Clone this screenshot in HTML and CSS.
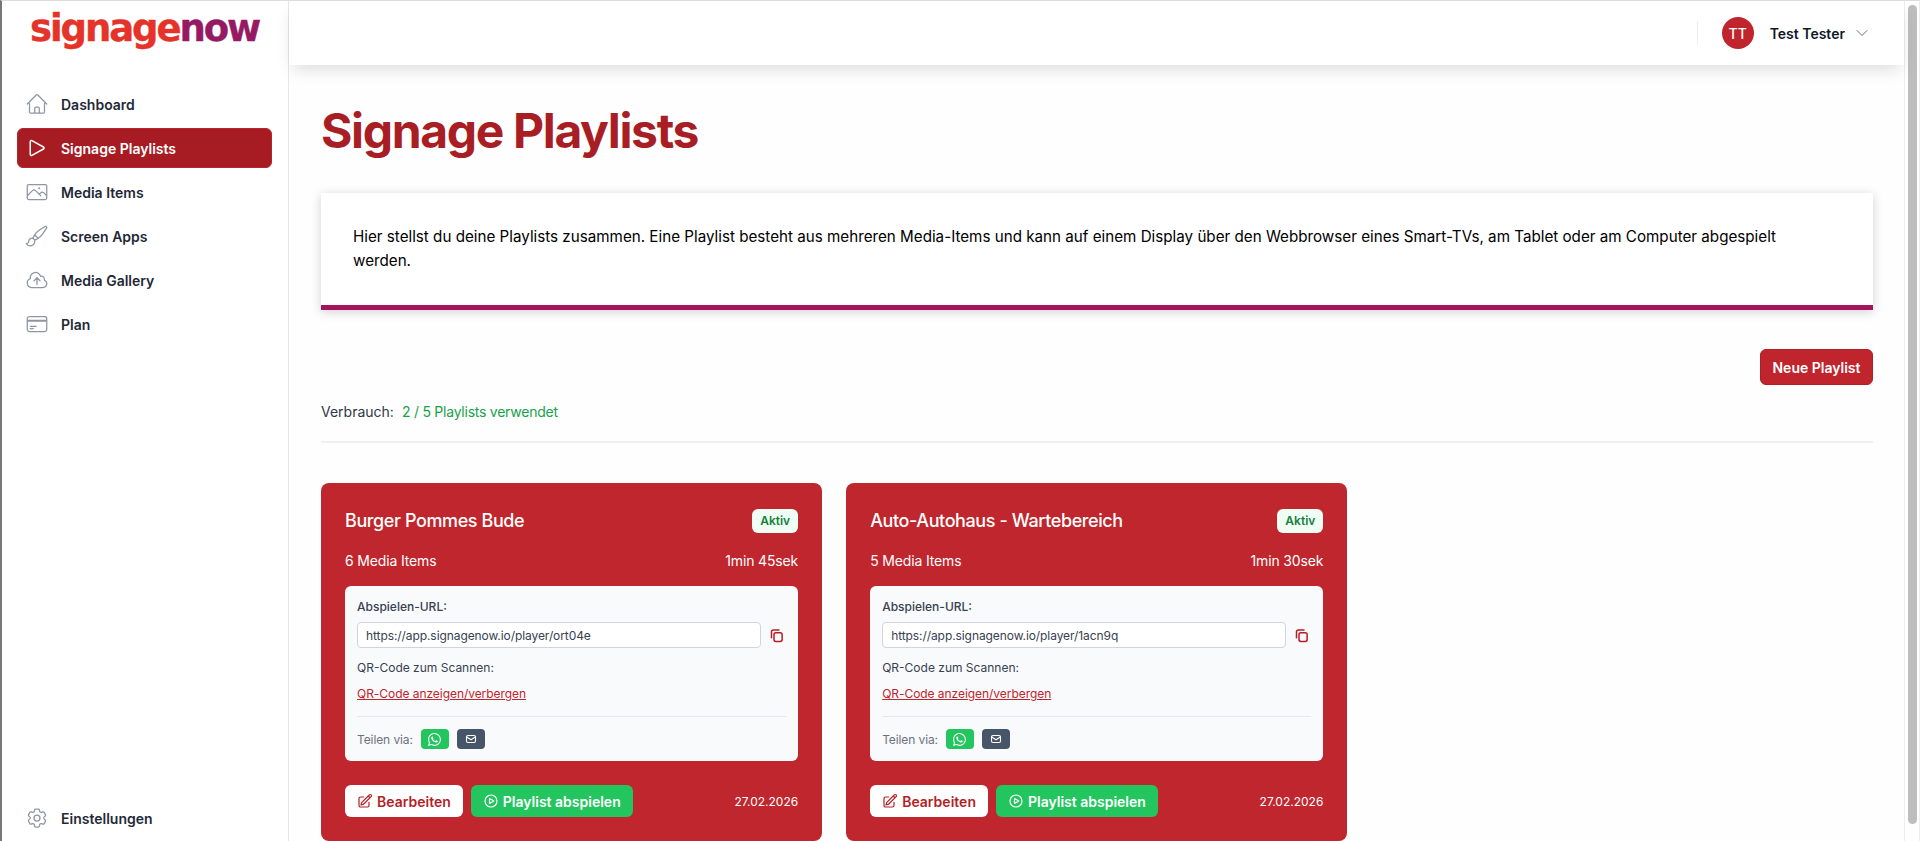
FILE: index.html
```html
<!DOCTYPE html>
<html lang="de">
<head>
<meta charset="utf-8">
<title>Signage Playlists</title>
<link rel="stylesheet" href="styles.css">
</head>
<body>
<div class="window">
  <aside class="sidebar">
    <div class="logo"><span class="logo-a">signage</span><span class="logo-b">now</span></div>
    <nav class="nav">
      <a class="nav-item"><svg class="nav-icon" viewBox="0 0 24 24"><path d="M2.25 12l8.954-8.955c.44-.439 1.152-.439 1.591 0L21.75 12M4.5 9.75v10.125c0 .621.504 1.125 1.125 1.125H9.75v-4.875c0-.621.504-1.125 1.125-1.125h2.25c.621 0 1.125.504 1.125 1.125V21h4.125c.621 0 1.125-.504 1.125-1.125V9.75M8.25 21h8.25"/></svg>Dashboard</a>
      <a class="nav-item active"><svg class="nav-icon" viewBox="0 0 24 24"><path d="M5.25 5.653c0-.856.917-1.398 1.667-.986l11.54 6.347a1.125 1.125 0 010 1.972l-11.54 6.347a1.125 1.125 0 01-1.667-.986V5.653z"/></svg>Signage Playlists</a>
      <a class="nav-item"><svg class="nav-icon" viewBox="0 0 24 24"><path d="M2.25 15.75l5.159-5.159a2.25 2.25 0 013.182 0l5.159 5.159m-1.5-1.5l1.409-1.409a2.25 2.25 0 013.182 0l2.909 2.909m-18 3.75h16.5a1.5 1.5 0 001.5-1.5V6a1.5 1.5 0 00-1.5-1.5H3.75A1.5 1.5 0 002.25 6v12a1.5 1.5 0 001.5 1.5zm10.5-11.25h.008v.008h-.008V8.25zm.375 0a.375.375 0 11-.75 0 .375.375 0 01.75 0z"/></svg>Media Items</a>
      <a class="nav-item"><svg class="nav-icon" viewBox="0 0 24 24"><path d="M9.53 16.122a3 3 0 00-5.78 1.128 2.25 2.25 0 01-2.4 2.245 4.5 4.5 0 008.4-2.245c0-.399-.078-.78-.22-1.128zm0 0a15.998 15.998 0 003.388-1.62m-5.043-.025a15.994 15.994 0 011.622-3.395m3.42 3.42a15.995 15.995 0 004.764-4.648l3.876-5.814a1.151 1.151 0 00-1.597-1.597L14.146 6.32a15.996 15.996 0 00-4.649 4.763m3.42 3.42a6.776 6.776 0 00-3.42-3.42"/></svg>Screen Apps</a>
      <a class="nav-item"><svg class="nav-icon" viewBox="0 0 24 24"><path d="M12 16.5V9.75m0 0l3 3m-3-3l-3 3M6.75 19.5a4.5 4.5 0 01-1.41-8.775 5.25 5.25 0 0110.233-2.33 3 3 0 013.758 3.848A3.752 3.752 0 0118 19.5H6.75z"/></svg>Media Gallery</a>
      <a class="nav-item"><svg class="nav-icon" viewBox="0 0 24 24"><path d="M2.25 8.25h19.5M2.25 9h19.5m-16.5 5.25h6m-6 2.25h3m-3.75 3h15a2.25 2.25 0 002.25-2.25V6.75A2.25 2.25 0 0019.5 4.5h-15a2.25 2.25 0 00-2.25 2.25v10.5A2.25 2.25 0 004.5 19.5z"/></svg>Plan</a>
    </nav>
    <a class="nav-item settings"><svg class="nav-icon" viewBox="0 0 24 24"><path d="M9.594 3.94c.09-.542.56-.94 1.11-.94h2.593c.55 0 1.02.398 1.11.94l.213 1.281c.063.374.313.686.645.87.074.04.147.083.22.127.324.196.72.257 1.075.124l1.217-.456a1.125 1.125 0 011.37.49l1.296 2.247a1.125 1.125 0 01-.26 1.431l-1.003.827c-.293.24-.438.613-.431.992a6.759 6.759 0 010 .255c-.007.378.138.75.43.99l1.005.828c.424.35.534.954.26 1.43l-1.298 2.247a1.125 1.125 0 01-1.369.491l-1.217-.456c-.355-.133-.75-.072-1.076.124a6.57 6.57 0 01-.22.128c-.331.183-.581.495-.644.869l-.213 1.28c-.09.543-.56.941-1.11.941h-2.594c-.55 0-1.02-.398-1.11-.94l-.213-1.281c-.062-.374-.312-.686-.644-.87a6.52 6.52 0 01-.22-.127c-.325-.196-.72-.257-1.076-.124l-1.217.456a1.125 1.125 0 01-1.369-.49l-1.297-2.247a1.125 1.125 0 01.26-1.431l1.004-.827c.292-.24.437-.613.43-.992a6.932 6.932 0 010-.255c.007-.378-.138-.75-.43-.99l-1.004-.828a1.125 1.125 0 01-.26-1.43l1.297-2.247a1.125 1.125 0 011.37-.491l1.216.456c.356.133.751.072 1.076-.124.072-.044.146-.087.22-.128.332-.183.582-.495.644-.869l.214-1.281z"/><path d="M15 12a3 3 0 11-6 0 3 3 0 016 0z"/></svg>Einstellungen</a>
  </aside>

  <div class="main">
    <header class="topbar">
      <span class="divider"></span>
      <span class="avatar">TT</span>
      <span class="username">Test Tester</span>
      <svg class="chevron" viewBox="0 0 24 24"><path d="M19.5 8.25l-7.5 7.5-7.5-7.5"/></svg>
    </header>
    <main class="content">
      <h1 class="title">Signage Playlists</h1>
      <section class="info">
        <p>Hier stellst du deine Playlists zusammen. Eine Playlist besteht aus mehreren Media-Items und kann auf einem Display über den Webbrowser eines Smart-TVs, am Tablet oder am Computer abgespielt werden.</p>
      </section>
      <div class="actions"><button class="btn-new">Neue Playlist</button></div>
      <div class="usage"><span>Verbrauch:</span><span class="usage-val">2 / 5 Playlists verwendet</span></div>
      <div class="grid">
        <article class="card">
          <div class="card-head"><h2>Burger Pommes Bude</h2><span class="badge">Aktiv</span></div>
          <div class="card-meta"><span>6 Media Items</span><span>1min 45sek</span></div>
          <div class="panel">
            <div class="label">Abspielen-URL:</div>
            <div class="url-row">
              <input class="url" readonly value="https://app.signagenow.io/player/ort04e">
              <svg class="copy" viewBox="0 0 24 24"><path d="M4 15.500V6a3 3 0 0 1 3-3h9"/><rect x="8" y="7.500" width="13" height="14" rx="3"/></svg>
            </div>
            <div class="label qr">QR-Code zum Scannen:</div>
            <a class="qr-link">QR-Code anzeigen/verbergen</a>
            <div class="share">
              <span class="share-label">Teilen via:</span>
              <span class="share-btn wa"><svg viewBox="0 0 16 16"><path d="M13.601 2.326A7.854 7.854 0 0 0 7.994 0C3.627 0 .068 3.558.064 7.926c0 1.399.366 2.76 1.057 3.965L0 16l4.204-1.102a7.933 7.933 0 0 0 3.79.965h.004c4.368 0 7.926-3.558 7.93-7.93A7.898 7.898 0 0 0 13.6 2.326zM7.994 14.521a6.573 6.573 0 0 1-3.356-.92l-.24-.144-2.494.654.666-2.433-.156-.251a6.56 6.56 0 0 1-1.007-3.505c0-3.626 2.957-6.584 6.591-6.584a6.56 6.56 0 0 1 4.66 1.931 6.557 6.557 0 0 1 1.928 4.66c-.004 3.639-2.961 6.592-6.592 6.592zm3.615-4.934c-.197-.099-1.17-.578-1.353-.646-.182-.065-.315-.099-.445.099-.133.197-.513.646-.627.775-.114.133-.232.148-.43.05-.197-.1-.836-.308-1.592-.985-.59-.525-.985-1.175-1.103-1.372-.114-.198-.011-.304.088-.403.087-.088.197-.232.296-.346.1-.114.133-.198.198-.33.065-.134.034-.248-.015-.347-.05-.099-.445-1.076-.612-1.47-.16-.389-.323-.335-.445-.34-.114-.007-.247-.007-.38-.007a.729.729 0 0 0-.529.247c-.182.198-.691.677-.691 1.654 0 .977.71 1.916.81 2.049.098.133 1.394 2.132 3.383 2.992.47.205.84.326 1.129.418.475.152.904.129 1.246.08.38-.058 1.171-.48 1.338-.943.164-.464.164-.86.114-.943-.049-.084-.182-.133-.38-.232z"/></svg></span>
              <span class="share-btn mail"><svg viewBox="0 0 24 24"><rect x="3" y="5" width="18" height="14" rx="3"/><path d="M3.500 8l8.500 5.500L20.500 8"/></svg></span>
            </div>
          </div>
          <div class="card-foot">
            <button class="btn-edit"><svg viewBox="0 0 24 24"><path d="M16.862 4.487l1.687-1.688a1.875 1.875 0 112.652 2.652L10.582 16.07a4.5 4.5 0 01-1.897 1.13L6 18l.8-2.685a4.5 4.5 0 011.13-1.897l8.932-8.931zm0 0L19.5 7.125M18 14v4.750A2.250 2.250 0 0115.750 21H5.250A2.250 2.250 0 013 18.750V8.250A2.250 2.250 0 015.250 6H10"/></svg>Bearbeiten</button>
            <button class="btn-play"><svg viewBox="0 0 24 24"><path d="M21 12a9 9 0 11-18 0 9 9 0 0118 0z"/><path d="M15.910 11.672a.375.375 0 010 .656l-5.603 3.113a.375.375 0 01-.557-.328V8.887c0-.286.307-.466.557-.327l5.603 3.112z"/></svg>Playlist abspielen</button>
            <span class="date">27.02.2026</span>
          </div>
        </article>
        <article class="card">
          <div class="card-head"><h2>Auto-Autohaus - Wartebereich</h2><span class="badge">Aktiv</span></div>
          <div class="card-meta"><span>5 Media Items</span><span>1min 30sek</span></div>
          <div class="panel">
            <div class="label">Abspielen-URL:</div>
            <div class="url-row">
              <input class="url" readonly value="https://app.signagenow.io/player/1acn9q">
              <svg class="copy" viewBox="0 0 24 24"><path d="M4 15.500V6a3 3 0 0 1 3-3h9"/><rect x="8" y="7.500" width="13" height="14" rx="3"/></svg>
            </div>
            <div class="label qr">QR-Code zum Scannen:</div>
            <a class="qr-link">QR-Code anzeigen/verbergen</a>
            <div class="share">
              <span class="share-label">Teilen via:</span>
              <span class="share-btn wa"><svg viewBox="0 0 16 16"><path d="M13.601 2.326A7.854 7.854 0 0 0 7.994 0C3.627 0 .068 3.558.064 7.926c0 1.399.366 2.76 1.057 3.965L0 16l4.204-1.102a7.933 7.933 0 0 0 3.79.965h.004c4.368 0 7.926-3.558 7.93-7.93A7.898 7.898 0 0 0 13.6 2.326zM7.994 14.521a6.573 6.573 0 0 1-3.356-.92l-.24-.144-2.494.654.666-2.433-.156-.251a6.56 6.56 0 0 1-1.007-3.505c0-3.626 2.957-6.584 6.591-6.584a6.56 6.56 0 0 1 4.66 1.931 6.557 6.557 0 0 1 1.928 4.66c-.004 3.639-2.961 6.592-6.592 6.592zm3.615-4.934c-.197-.099-1.17-.578-1.353-.646-.182-.065-.315-.099-.445.099-.133.197-.513.646-.627.775-.114.133-.232.148-.43.05-.197-.1-.836-.308-1.592-.985-.59-.525-.985-1.175-1.103-1.372-.114-.198-.011-.304.088-.403.087-.088.197-.232.296-.346.1-.114.133-.198.198-.33.065-.134.034-.248-.015-.347-.05-.099-.445-1.076-.612-1.47-.16-.389-.323-.335-.445-.34-.114-.007-.247-.007-.38-.007a.729.729 0 0 0-.529.247c-.182.198-.691.677-.691 1.654 0 .977.71 1.916.81 2.049.098.133 1.394 2.132 3.383 2.992.47.205.84.326 1.129.418.475.152.904.129 1.246.08.38-.058 1.171-.48 1.338-.943.164-.464.164-.86.114-.943-.049-.084-.182-.133-.38-.232z"/></svg></span>
              <span class="share-btn mail"><svg viewBox="0 0 24 24"><rect x="3" y="5" width="18" height="14" rx="3"/><path d="M3.500 8l8.500 5.500L20.500 8"/></svg></span>
            </div>
          </div>
          <div class="card-foot">
            <button class="btn-edit"><svg viewBox="0 0 24 24"><path d="M16.862 4.487l1.687-1.688a1.875 1.875 0 112.652 2.652L10.582 16.07a4.5 4.5 0 01-1.897 1.13L6 18l.8-2.685a4.5 4.5 0 011.13-1.897l8.932-8.931zm0 0L19.5 7.125M18 14v4.750A2.250 2.250 0 0115.750 21H5.250A2.250 2.250 0 013 18.750V8.250A2.250 2.250 0 015.250 6H10"/></svg>Bearbeiten</button>
            <button class="btn-play"><svg viewBox="0 0 24 24"><path d="M21 12a9 9 0 11-18 0 9 9 0 0118 0z"/><path d="M15.910 11.672a.375.375 0 010 .656l-5.603 3.113a.375.375 0 01-.557-.328V8.887c0-.286.307-.466.557-.327l5.603 3.112z"/></svg>Playlist abspielen</button>
            <span class="date">27.02.2026</span>
          </div>
        </article>
      </div>
    </main>
  </div>
  <div class="scrollbar"><span class="thumb"></span></div>
</div>
</body>
</html>
```

FILE: styles.css
```css
* { box-sizing: border-box; }
html, body { margin: 0; height: 100%; overflow: hidden; }
body { font-family: Inter, "Liberation Sans", sans-serif; color: #111827; background: #fff; }
h1, h2, p { margin: 0; }
button { font-family: inherit; border: 0; cursor: pointer; }
svg { fill: none; stroke: currentColor; stroke-linecap: round; stroke-linejoin: round; flex: none; }

.window { display: flex; height: 841px; overflow: hidden; border-left: 2px solid #777; border-top: 1px solid #ddd; }

.sidebar { width: 287px; flex: none; display: flex; flex-direction: column; background: #fff; border-right: 1px solid #e5e7eb; padding: 0 16px 0 15px; }
.logo { height: 60px; padding: 3px 0 0 13px; font-family: "DejaVu Sans", sans-serif; font-weight: 700; font-size: 37px; line-height: 50px; letter-spacing: -2.1px; white-space: nowrap; -webkit-text-stroke: .4px currentColor; }
.logo-a { color: #e5332a; }
.logo-b { color: #951a62; }
.nav { display: flex; flex-direction: column; gap: 4px; margin-top: 23px; flex: 1; }
.nav-item { display: flex; align-items: center; gap: 12px; height: 40px; padding: 0 8px; border-radius: 6px; font-size: 14px; font-weight: 600; color: #1f2937; }
.nav-icon { width: 24px; height: 24px; stroke: #8e95a3; stroke-width: 1.25; }
.nav-item.active { background: #a61c22; color: #fff; border: 1px solid #b8242b; padding: 0 7px; }
.nav-item.active .nav-icon { stroke: #fff; stroke-width: 1.5; }
.settings { margin-bottom: 3px; }

.main { flex: 1; min-width: 0; display: flex; flex-direction: column; background: #fefefe; }
.topbar { height: 64px; flex: none; display: flex; align-items: center; justify-content: flex-end; background: #fff; box-shadow: 0 8px 16px -4px rgba(0,0,0,.14); padding-right: 34px; position: relative; }
.divider { width: 1px; height: 24px; background: #eceef1; margin-right: 24px; }
.avatar { width: 32px; height: 32px; border-radius: 50%; background: #c0242c; color: #fff; display: flex; align-items: center; justify-content: center; font-size: 14px; font-weight: 500; margin-right: 16px; }
.username { font-size: 14px; font-weight: 600; color: #111827; margin-right: 9px; }
.chevron { width: 16px; height: 16px; stroke: #6b7280; stroke-width: 1.5; }

.content { padding: 38px 31.5px 0 32px; }
.title { font-size: 48px; line-height: 56px; font-weight: 700; letter-spacing: -1.35px; color: #a91e25; }
.info { margin-top: 34px; background: #fff; border-bottom: 5px solid #a3145a; box-shadow: 0 2px 10px rgba(0,0,0,.18); padding: 32px 48px 0 32px; font-size: 15.2px; line-height: 24px; color: #000; height: 117px; }
.actions { display: flex; justify-content: flex-end; margin-top: 39px; }
.btn-new { height: 36px; padding: 0 11px; background: #c0242c; color: #fff; font-size: 14px; font-weight: 600; border-radius: 6px; border: 1px solid #b01f27; }
.usage { display: flex; gap: 8px; align-items: center; font-size: 14px; margin-top: 17px; padding-bottom: 20px; border-bottom: 2px solid #eef0f2; color: #2f3748; height: 41px; }
.usage-val { color: #16a34a; letter-spacing: -.24px; }

.grid { display: grid; grid-template-columns: repeat(3, 1fr); gap: 24px; margin-top: 40px; }
.card { background: #bf262d; border-radius: 8px; padding: 25px 24px 24px; color: #fff; }
.card-head { display: flex; justify-content: space-between; align-items: center; height: 25px; }
.card-head h2 { font-size: 18px; font-weight: 500; line-height: 25px; letter-spacing: -.4px; }
.badge { background: #f0fdf4; color: #15803d; font-size: 12px; font-weight: 600; padding: 0 8px; height: 24px; line-height: 24px; border-radius: 6px; }
.card-meta { display: flex; justify-content: space-between; font-size: 14px; line-height: 20px; margin-top: 18px; letter-spacing: -.15px; }
.panel { background: #f9fafb; border-radius: 6px; margin-top: 15px; padding: 13px 12px 12px; color: #374151; font-size: 12px; height: 175px; }
.label { font-weight: 500; line-height: 16px; color: #374151; }
.url-row { display: flex; align-items: center; gap: 8px; margin-top: 7px; }
.url { flex: 1; min-width: 0; height: 26px; border: 1px solid #d1d5db; border-radius: 4px; background: #fff; padding: 0 8px; font: 400 12px Inter, sans-serif; letter-spacing: -.08px; color: #374151; outline: none; }
.copy { width: 15px; height: 15px; stroke: #b91c24; stroke-width: 2.4; margin-right: 2px; }
.label.qr { margin-top: 12px; font-weight: 400; }
.qr-link { display: block; color: #c0252d; text-decoration: underline; line-height: 16px; margin-top: 10px; letter-spacing: -.05px; }
.share { display: flex; align-items: center; gap: 8px; margin-top: 14px; border-top: 1px solid #e5e7eb; padding-top: 12px; color: #6b7280; }
.share-label { letter-spacing: -.1px; }
.share-btn { width: 28px; height: 20px; border-radius: 4px; display: flex; align-items: center; justify-content: center; color: #fff; }
.wa { background: #22c55e; }
.wa svg { width: 13px; height: 13px; fill: currentColor; stroke: none; }
.mail { background: #475569; }
.mail svg { width: 12px; height: 12px; stroke-width: 2.2; }
.card-foot { display: flex; align-items: center; gap: 8px; margin-top: 24px; }
.card-foot button { height: 32px; padding: 0 12px; border-radius: 6px; display: flex; align-items: center; gap: 4px; font-size: 14px; font-weight: 600; }
.card-foot svg { width: 16px; height: 16px; stroke-width: 1.8; }
.btn-edit { background: #fff; color: #b31f27; }
.btn-play { background: #22c55e; color: #fff; }
.date { margin-left: auto; font-size: 12px; font-weight: 400; }

.scrollbar { width: 16px; flex: none; background: #fff; border-left: 1px solid #eee; border-right: 1px solid #eee; padding: 4px 0 0 3px; }
.thumb { display: block; width: 9px; height: 819px; border-radius: 5px; background: #bdbdbd; }
```
